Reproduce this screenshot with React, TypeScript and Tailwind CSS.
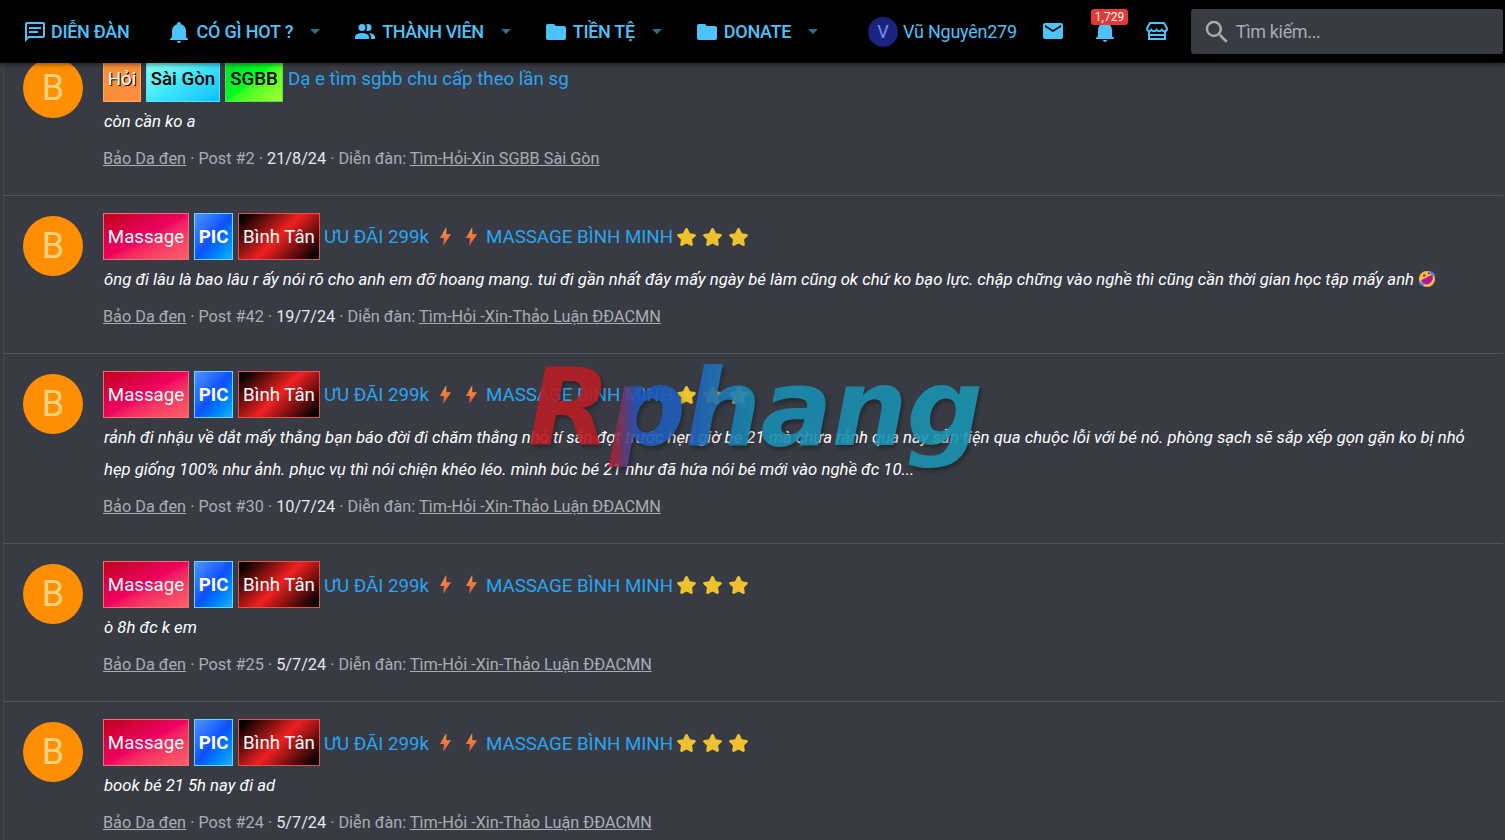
import type { ReactNode } from "react";

const paths = {
  message:
    "M20,2H4A2,2 0 0,0 2,4V22L6,18H20A2,2 0 0,0 22,16V4C22,2.89 21.1,2 20,2M20,16H5.17L4,17.17V4H20V16M6,7H18V9H6V7M6,11H15V13H6V11Z",
  bell: "M21,19V20H3V19L5,17V11C5,7.9 7.03,5.17 10,4.29C10,4.19 10,4.1 10,4A2,2 0 0,1 12,2A2,2 0 0,1 14,4C14,4.1 14,4.19 14,4.29C16.97,5.17 19,7.9 19,11V17L21,19M14,21A2,2 0 0,1 12,23A2,2 0 0,1 10,21",
  people:
    "M16 17V19H2V17S2 13 9 13 16 17 16 17M12.5 7.5A3.5 3.5 0 1 0 9 11A3.5 3.5 0 0 0 12.5 7.5M15.94 13A5.32 5.32 0 0 1 18 17V19H22V17S22 13.37 15.94 13M15 4A3.39 3.39 0 0 0 13.07 4.59A5 5 0 0 1 13.07 10.41A3.39 3.39 0 0 0 15 11A3.5 3.5 0 0 0 15 4Z",
  folder:
    "M10,4H4C2.89,4 2,4.89 2,6V18A2,2 0 0,0 4,20H20A2,2 0 0,0 22,18V8C22,6.89 21.1,6 20,6H12L10,4Z",
  mail: "M20,8L12,13L4,8V6L12,11L20,6M20,4H4C2.89,4 2,4.89 2,6V18A2,2 0 0,0 4,20H20A2,2 0 0,0 22,18V6C22,4.89 21.1,4 20,4Z",
  search:
    "M9.5,3A6.5,6.5 0 0,1 16,9.5C16,11.11 15.41,12.59 14.44,13.73L14.71,14H15.5L20.5,19L19,20.5L14,15.5V14.71L13.73,14.44C12.59,15.41 11.11,16 9.5,16A6.5,6.5 0 0,1 3,9.5A6.5,6.5 0 0,1 9.5,3M9.5,5C7,5 5,7 5,9.5C5,12 7,14 9.5,14C12,14 14,12 14,9.5C14,7 12,5 9.5,5Z",
};

function Icon({ d, className }: { d: string; className: string }) {
  return (
    <svg viewBox="0 0 24 24" className={className} fill="currentColor">
      <path d={d} />
    </svg>
  );
}

function StoreIcon() {
  return (
    <svg viewBox="0 0 24 24" className="mb-[2px] h-6 w-6" fill="none" stroke="currentColor" strokeWidth="2">
      <path d="M5 4h14l3 5.5c0 1.6-1.2 2.7-2.7 2.7c-1.2 0-2-.6-2.6-1.5c-.6.9-1.5 1.5-2.6 1.5s-2-.6-2.6-1.5c-.6.9-1.5 1.5-2.6 1.5s-2-.6-2.6-1.5c-.6.9-1.4 1.5-2.6 1.5C3.2 12.2 2 11.1 2 9.5z" />
      <path d="M4 12v8h16v-8M4 16h16" />
    </svg>
  );
}

function Caret() {
  return <span className="ml-[17px] h-0 w-0 border-x-[5.5px] border-t-[5.5px] border-x-transparent border-t-[#2f6f8f]" />;
}

function Flash() {
  return (
    <svg viewBox="0 0 16 24" className="h-[19px] w-[13px]">
      <defs>
        <linearGradient id="flash" x1="0" y1="0" x2="0" y2="1">
          <stop offset="0" stopColor="#f9a03f" />
          <stop offset="1" stopColor="#e8503f" />
        </linearGradient>
      </defs>
      <path d="M9 0 1 14h5l-1 10 10-15H9z" fill="url(#flash)" />
    </svg>
  );
}

function Star() {
  return (
    <svg viewBox="0 0 24 24" className="h-[21px] w-[21px]">
      <path
        d="M12 2.2c.7 0 1.2.4 1.5 1l2.4 5 5.4.8c1.4.2 1.9 1.8.9 2.7l-3.9 3.8.9 5.4c.2 1.4-1.2 2.4-2.4 1.7L12 20.1l-4.8 2.5c-1.2.7-2.6-.3-2.4-1.7l.9-5.4-3.9-3.8c-1-.9-.5-2.5.9-2.7l5.4-.8 2.4-5c.3-.6.8-1 1.5-1z"
        fill="#eec22e"
      />
    </svg>
  );
}

function Rofl() {
  return (
    <svg viewBox="0 0 20 20" className="inline-block h-[18px] w-[18px] align-[-3px]">
      <circle cx="10" cy="10" r="9" fill="#f8b84a" />
      <path d="M3.5 11.5 16 5c1.5 4-.5 9-4.5 10.5S5 15 3.5 11.5z" fill="#b01a9c" />
      <path d="M1.5 14 6 17M14 2.5l4.5 3" stroke="#3b82f6" strokeWidth="2.5" />
      <circle cx="7" cy="6" r="1.4" fill="#6b3a12" />
      <circle cx="12" cy="3.6" r="1.2" fill="#6b3a12" />
    </svg>
  );
}

function Label({ className, children }: { className: string; children: ReactNode }) {
  return (
    <span className={`flex h-[47px] items-center justify-center whitespace-nowrap border pt-[2px] text-[18.7px] leading-none ${className}`}>
      {children}
    </span>
  );
}

function MassageTitle() {
  return (
    <>
      <Label className="w-[86px] border-[#f07078] bg-gradient-to-br from-[#c00018] via-[#f00060] to-[#ff6068] text-white">
        Massage
      </Label>
      <Label className="ml-[5px] w-[39px] border-[#60d8ff] bg-gradient-to-br from-[#5090ff] via-[#1050ff] to-[#20b0ff] font-bold text-white">
        PIC
      </Label>
      <Label className="ml-[5px] w-[82px] border-[#e85050] bg-[linear-gradient(135deg,#000_5%,#f02020_50%,#000_95%)] text-white">
        Bình Tân
      </Label>
      <span className="ml-1 pt-[2px] text-[#2ba4f0]">ƯU ĐÃI 299k</span>
      <span className="ml-[10px] flex w-[26px]"><Flash /></span>
      <span className="flex w-[21px]"><Flash /></span>
      <span className="pt-[2px] text-[#2ba4f0]">MASSAGE BÌNH MINH</span>
      <span className="ml-[3px] flex w-[26px]"><Star /></span>
      <span className="flex w-[26px]"><Star /></span>
      <span className="flex w-[26px]"><Star /></span>
    </>
  );
}

function AskTitle() {
  return (
    <>
      <Label className="w-[38px] border-[#ffa860] bg-gradient-to-br from-[#f59030] to-[#ff8c40] text-white [text-shadow:1px_1px_0_#000]">
        Hỏi
      </Label>
      <Label className="ml-[5px] w-[74px] border-[#50e8f0] bg-gradient-to-br from-[#90fff0] via-[#40e8f8] to-[#00c0ff] font-medium text-black">
        Sài Gòn
      </Label>
      <Label className="ml-[5px] w-[58px] border-[#50e060] bg-gradient-to-br from-[#00d830] via-[#00ff20] to-[#a0ff30] font-medium text-black">
        SGBB
      </Label>
      <span className="ml-[5px] pt-[2px] text-[#2ba4f0]">Dạ e tìm sgbb chu cấp theo lần sg</span>
    </>
  );
}

const rows = [
  {
    title: <AskTitle />,
    body: "còn cần ko a",
    post: "#2",
    date: "21/8/24",
    forum: "Tìm-Hỏi-Xin SGBB Sài Gòn",
  },
  {
    title: <MassageTitle />,
    body: (
      <>
        ông đi lâu là bao lâu r ấy nói rõ cho anh em đỡ hoang mang. tui đi gần nhất đây mấy ngày bé làm cũng ok chứ ko bạo lực. chập chững vào nghề thì cũng cần thời gian học tập mấy anh <Rofl />
      </>
    ),
    post: "#42",
    date: "19/7/24",
    forum: "Tìm-Hỏi -Xin-Thảo Luận ĐĐACMN",
  },
  {
    title: <MassageTitle />,
    body: "rảnh đi nhậu về dắt mấy thằng bạn báo đời đi chăm thằng nhỏ tí sẵn đợt trước hẹn giờ be 21 mà chưa rảnh qua nay sẵn tiện qua chuộc lỗi với bé nó. phòng sạch sẽ sắp xếp gọn gặn ko bị nhỏ hẹp giống 100% như ảnh. phục vụ thì nói chiện khéo léo. mình búc bé 21 như đã hứa nói bé mới vào nghề đc 10...",
    post: "#30",
    date: "10/7/24",
    forum: "Tìm-Hỏi -Xin-Thảo Luận ĐĐACMN",
  },
  {
    title: <MassageTitle />,
    body: "ò 8h đc k em",
    post: "#25",
    date: "5/7/24",
    forum: "Tìm-Hỏi -Xin-Thảo Luận ĐĐACMN",
  },
  {
    title: <MassageTitle />,
    body: "book bé 21 5h nay đi ad",
    post: "#24",
    date: "5/7/24",
    forum: "Tìm-Hỏi -Xin-Thảo Luận ĐĐACMN",
  },
];

const navItems = [
  { icon: paths.bell, label: "CÓ GÌ HOT ?", ml: "ml-[38px]", tracking: "tracking-[-0.2px]" },
  { icon: paths.people, label: "THÀNH VIÊN", ml: "ml-[33px]", tracking: "tracking-[-0.4px]" },
  { icon: paths.folder, label: "TIỀN TỆ", ml: "ml-[33px]", tracking: "tracking-[-0.3px]" },
  { icon: paths.folder, label: "DONATE", ml: "ml-[33px]", tracking: "tracking-[-0.3px]" },
];

export default function App() {
  return (
    <div className="relative h-[840px] overflow-hidden bg-[#383b44] font-['Roboto',sans-serif]">
      <header className="relative z-20 flex h-[63px] items-center bg-black pl-[23px] pr-[2px] text-[#4cc3fb] shadow-[0_2px_4px_rgba(0,0,0,0.4)]">
        <div className="flex items-center gap-1 text-[18px] font-medium">
          <Icon d={paths.message} className="h-6 w-6" />
          <span className="tracking-[-0.3px]">DIỄN ĐÀN</span>
        </div>
        {navItems.map((item) => (
          <div key={item.label} className={`flex items-center text-[18px] font-medium ${item.ml}`}>
            <Icon d={item.icon} className="h-6 w-6" />
            <span className={`ml-[5px] ${item.tracking}`}>{item.label}</span>
            <Caret />
          </div>
        ))}
        <span className="ml-[50px] flex h-[30px] w-[30px] items-center justify-center rounded-full bg-[#1a237e] text-[18px] text-[#7c8cf0]">
          V
        </span>
        <span className="ml-[5px] text-[18px] tracking-[-0.25px]">Vũ Nguyên279</span>
        <Icon d={paths.mail} className="mb-[2px] ml-[24px] h-6 w-6" />
        <div className="relative mb-[2px] ml-[28px]">
          <Icon d={paths.bell} className="h-6 w-6" />
          <span className="absolute -left-[2px] -top-[10px] rounded-[3px] bg-[#e53935] px-[4px] text-[12px] leading-[16px] text-white">
            1,729
          </span>
        </div>
        <span className="ml-[28px]"><StoreIcon /></span>
        <div className="ml-[22px] flex h-[45px] flex-1 items-center rounded-[3px] bg-[#383b44] pl-[11px] text-[#a8abb2]">
          <Icon d={paths.search} className="h-[30px] w-[30px]" />
          <span className="ml-[4px] text-[18px] tracking-[-0.35px]">Tìm kiếm...</span>
        </div>
      </header>

      <main className="-mt-[25px] ml-[3px] mr-[2px] border-l border-[#44474f]">
        {rows.map((row, i) => (
          <div key={i} className="flex border-b border-[#52555c] pb-[24.4px] pl-[19px] pr-[20px] pt-[17px]">
            <div className="mt-[3px] flex h-[60px] w-[60px] shrink-0 items-center justify-center rounded-full bg-[#ff8f00] text-[36px] text-[#ffd180]">
              B
            </div>
            <div className="ml-[20px] min-w-0 flex-1">
              <div className="flex h-[47px] items-center text-[18.7px]">{row.title}</div>
              <p className="mt-[3px] pl-px text-[16.72px] italic leading-[32.2px] text-white">{row.body}</p>
              <p className="mt-[9.4px] text-[16.25px] leading-[24px] text-[#a9adb3]">
                <span className="underline">Bảo Da đen</span> · Post {row.post} ·{" "}
                <span className="text-[#e6e7ea]">{row.date}</span> · Diễn đàn:{" "}
                <span className="underline">{row.forum}</span>
              </p>
            </div>
          </div>
        ))}
      </main>

      {/* logo watermark */}
      <div className="pointer-events-none absolute left-[528px] top-[348px] z-10 bg-[linear-gradient(90deg,#b81c24_0%,#b81c24_18%,#1f55b8_24%,#1f62b8_36%,#1a8aaf_50%,#1a94b0_100%)] bg-clip-text pb-[30px] font-['DejaVu_Sans',sans-serif] text-[107px] font-bold italic leading-[120px] tracking-[-1px] text-transparent opacity-90 drop-shadow-[2px_3px_2px_rgba(0,0,0,0.35)]">
        Rphang
      </div>
    </div>
  );
}
